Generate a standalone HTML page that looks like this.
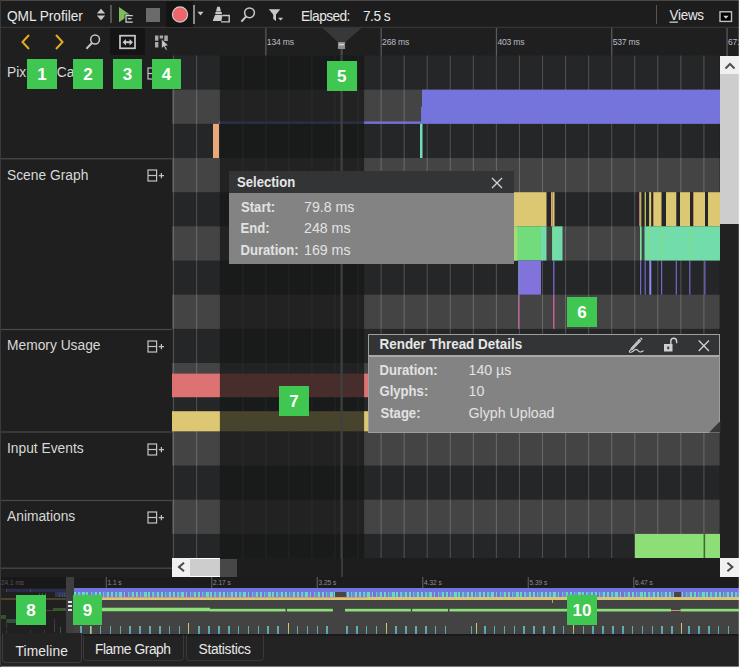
<!DOCTYPE html>
<html><head><meta charset="utf-8"><title>QML Profiler</title>
<style>
html,body{margin:0;padding:0;background:#1f1f1f;}
body{width:740px;height:668px;position:relative;overflow:hidden;font-family:"Liberation Sans",sans-serif;color:#e4e4e4;}
.a{position:absolute;}
.tb{font-size:13.2px;color:#e8e8e8;white-space:nowrap;}
.sy{display:inline-block;transform:scaleY(1.12);transform-origin:0 55%;}
.lbl{font-size:13.8px;color:#d8d8d8;white-space:nowrap;}
.tick{font-size:8.6px;color:#b8bcc8;white-space:nowrap;letter-spacing:-0.2px;}
.otick{font-size:6.5px;color:#8c8c8c;white-space:nowrap;}
.num{background:#3fc751;color:#fff;font-weight:bold;font-size:17px;text-align:center;font-family:"Liberation Sans",sans-serif;}
.pt{font-weight:bold;font-size:13.1px;transform:scaleY(1.1);transform-origin:0 50%;color:#e6e6e6;white-space:nowrap;}
.pk{font-weight:bold;font-size:13.1px;transform:scaleY(1.1);transform-origin:0 50%;color:#e2e2e2;white-space:nowrap;}
.pv{font-size:14.2px;transform:scaleY(1.04);transform-origin:0 50%;color:#e2e2e2;white-space:nowrap;}
svg{position:absolute;overflow:visible;}
</style></head><body>

<!-- toolbar -->
<div class="a" style="left:0px;top:0px;width:740px;height:28px;background:#1d1d1d;"></div>
<div class="a" style="left:0px;top:0px;width:740px;height:1.1px;background:#484848;"></div>
<svg style="left:0;top:26px" width="740" height="4"><rect x="0" y="0.7" width="740" height="2.2" fill="#343434"/></svg>
<div class="a" style="left:166px;top:1px;width:27px;height:26px;background:#141414;"></div>
<div class="a tb" style="left:7px;top:9px;font-size:13.7px;letter-spacing:-0.05px;"><span class="sy">QML Profiler</span></div>
<svg style="left:95px;top:7px" width="12" height="16" viewBox="0 0 12 16"><path d="M1.8 6.5 L6 1.8 L10.2 6.5 Z M1.8 8.5 L6 13.3 L10.2 8.5 Z" fill="#c8c8c8"/></svg>
<div class="a" style="left:110px;top:5px;width:1.5px;height:18px;background:#555;"></div>
<svg style="left:117px;top:5px" width="20" height="20" viewBox="0 0 20 20"><path d="M2 2 L2 17.3 L13 9.7 Z" fill="#7dbb60"/><rect x="7.6" y="9.6" width="9" height="9" fill="#1d1d1d"/><path d="M15.8 10.5 H9 V17 H15.8 M10.8 13.7 H14.6" stroke="#d0d0d0" stroke-width="1.25" fill="none"/></svg>
<div class="a" style="left:146px;top:8px;width:13.5px;height:13.5px;background:#6b6b6b;"></div>
<svg style="left:170px;top:4px" width="21" height="21" viewBox="0 0 21 21"><circle cx="10" cy="10.5" r="7.6" fill="#ee666c" stroke="#d0d0d0" stroke-width="1.1"/></svg>
<div class="a" style="left:193.4px;top:5.4px;width:1.5px;height:18.2px;background:#8a8a8a;"></div>
<svg style="left:197px;top:11px" width="8" height="6" viewBox="0 0 8 6"><path d="M0.5 0.8 H6.5 L3.5 4.6 Z" fill="#c8c8c8"/></svg>
<svg style="left:210px;top:4px" width="22" height="20" viewBox="0 0 22 20"><path d="M7.2 2.8 H9.8 L11 7.5 H6 Z M5.4 7.9 H11.8 V10.2 H5.4 Z M5 10.9 H12.5 L11.4 17 H2.7 Z" fill="#c8c8c8"/><path d="M12.4 11.5 H19.2 V17.9 H11" stroke="#c8c8c8" stroke-width="1.4" fill="none"/></svg>
<svg style="left:238px;top:4px" width="20" height="20" viewBox="0 0 20 20"><circle cx="11.5" cy="8.8" r="4.9" fill="none" stroke="#c8c8c8" stroke-width="1.5"/><path d="M8.2 12.4 L3.4 17.6" stroke="#c8c8c8" stroke-width="2.1"/></svg>
<svg style="left:266px;top:6px" width="20" height="18" viewBox="0 0 20 18"><path d="M2.8 3.2 H14.3 L10 8.5 V15 L7.2 13 V8.5 Z" fill="#c8c8c8"/><path d="M12 11.8 H17.2 L14.6 14.6 Z" fill="#c8c8c8"/></svg>
<div class="a tb" style="left:301px;top:8.5px;font-size:13.7px;letter-spacing:-0.55px;"><span class="sy">Elapsed:</span></div>
<div class="a tb" style="left:363px;top:8.5px;font-size:13.7px;letter-spacing:-0.5px;"><span class="sy">7.5 s</span></div>
<div class="a" style="left:656px;top:5px;width:1.2px;height:19px;background:#555;"></div>
<div class="a tb" style="left:669.5px;top:8.3px;font-size:13.4px;letter-spacing:-0.25px;"><span class="sy"><span style="text-decoration:underline;text-underline-offset:0.5px;">V</span>iews</span></div>
<svg style="left:719px;top:11px" width="14" height="12" viewBox="0 0 14 12"><rect x="1" y="0.8" width="11.5" height="9.6" fill="#000" stroke="#c0c0c0" stroke-width="1.4"/><path d="M4.2 4.8 H9.6 L6.9 7.8 Z" fill="#d0d0d0"/></svg>
<!-- nav row -->
<div class="a" style="left:0px;top:28px;width:740px;height:28px;background:#1f1f1f;"></div>
<div class="a" style="left:110px;top:28px;width:35px;height:28px;background:#141414;"></div>
<svg style="left:18px;top:33px" width="16" height="18" viewBox="0 0 16 18"><path d="M11 2 L4.5 9 L11 16" fill="none" stroke="#e0ae1e" stroke-width="2"/></svg>
<svg style="left:51px;top:33px" width="16" height="18" viewBox="0 0 16 18"><path d="M5 2 L11.5 9 L5 16" fill="none" stroke="#e0ae1e" stroke-width="2"/></svg>
<svg style="left:84px;top:32px" width="20" height="20" viewBox="0 0 20 20"><circle cx="11.1" cy="7.5" r="4.4" fill="none" stroke="#c4c4c4" stroke-width="1.5"/><path d="M8.2 10.8 L2.4 16.8" stroke="#c4c4c4" stroke-width="2"/></svg>
<svg style="left:119px;top:34px" width="18" height="16" viewBox="0 0 18 16"><rect x="1" y="1.7" width="15" height="12.6" fill="none" stroke="#c8c8c8" stroke-width="1.7"/><path d="M5.5 8.2 H12" stroke="#c8c8c8" stroke-width="2"/><path d="M7 5 L3.5 8.2 L7 11.4 Z M10.5 5 L14 8.2 L10.5 11.4 Z" fill="#c8c8c8"/></svg>
<svg style="left:154px;top:34px" width="16" height="18" viewBox="0 0 16 18"><path d="M1 1.4 H4.4 V6.8 H1 Z M1 8 H4.4 V13.6 H1 Z M5.7 1.4 H9.1 V4.5 H5.7 Z M10.3 1.4 H13.8 V7 H10.3 Z" fill="#a8a8a8"/><path d="M7.6 5 L7.6 14.6 L9.9 12.5 L11.8 16.3 L13.3 15.6 L11.4 11.9 L14.4 11.6 Z" fill="#c8c8c8" stroke="#1f1f1f" stroke-width="0.6"/></svg>
<svg style="left:0;top:28px" width="740" height="28"><rect x="265.24" y="0" width="1.25" height="28" fill="#5c5c5c"/></svg>
<div class="a tick" style="left:266.8px;top:37px;">134 ms</div>
<svg style="left:0;top:28px" width="740" height="28"><rect x="380.54" y="0" width="1.25" height="28" fill="#5c5c5c"/></svg>
<div class="a tick" style="left:382.1px;top:37px;">268 ms</div>
<svg style="left:0;top:28px" width="740" height="28"><rect x="495.84" y="0" width="1.25" height="28" fill="#5c5c5c"/></svg>
<div class="a tick" style="left:497.4px;top:37px;">403 ms</div>
<svg style="left:0;top:28px" width="740" height="28"><rect x="611.14" y="0" width="1.25" height="28" fill="#5c5c5c"/></svg>
<div class="a tick" style="left:612.7px;top:37px;">537 ms</div>
<svg style="left:0;top:28px" width="740" height="28"><rect x="726.44" y="0" width="1.25" height="28" fill="#5c5c5c"/></svg>
<div class="a tick" style="left:728.0px;top:37px;">671 ms</div>
<svg style="left:322px;top:28px" width="40" height="28" viewBox="0 0 40 28"><path d="M0.5 0 H39.5 L21.8 15.5 H17.6 Z" fill="#37383a"/><rect x="18.5" y="20" width="2.3" height="8" fill="#474747"/><rect x="15.9" y="14" width="7.2" height="7" fill="#8e8e8e"/><rect x="17" y="15.8" width="5" height="1.5" fill="#d4d4d4"/></svg>
<!-- timeline rows -->
<svg style="left:171px;top:55px;overflow:hidden;" width="548.6" height="503" viewBox="0 0 548.6 503">
<rect x="0.8" y="0.5" width="547.8" height="520" fill="#252628"/>
<rect x="0.80" y="34.67" width="547.80" height="34.17" fill="#444444"/>
<rect x="0.80" y="103.01" width="547.80" height="34.17" fill="#444444"/>
<rect x="0.80" y="171.35" width="547.80" height="34.17" fill="#444444"/>
<rect x="0.80" y="239.69" width="547.80" height="34.17" fill="#444444"/>
<rect x="0.80" y="308.03" width="547.80" height="34.17" fill="#444444"/>
<rect x="0.80" y="376.37" width="547.80" height="34.17" fill="#444444"/>
<rect x="0.80" y="444.71" width="547.80" height="34.17" fill="#444444"/>
<rect x="2.00" y="0.50" width="1.10" height="520.00" fill="rgba(255,255,255,0.19)"/>
<rect x="25.06" y="0.50" width="1.10" height="520.00" fill="rgba(255,255,255,0.19)"/>
<rect x="71.18" y="0.50" width="1.10" height="520.00" fill="rgba(255,255,255,0.19)"/>
<rect x="94.24" y="0.50" width="1.10" height="520.00" fill="rgba(255,255,255,0.19)"/>
<rect x="117.30" y="0.50" width="1.10" height="520.00" fill="rgba(255,255,255,0.19)"/>
<rect x="140.36" y="0.50" width="1.10" height="520.00" fill="rgba(255,255,255,0.19)"/>
<rect x="163.42" y="0.50" width="1.10" height="520.00" fill="rgba(255,255,255,0.19)"/>
<rect x="186.48" y="0.50" width="1.10" height="520.00" fill="rgba(255,255,255,0.19)"/>
<rect x="209.54" y="0.50" width="1.10" height="520.00" fill="rgba(255,255,255,0.19)"/>
<rect x="232.60" y="0.50" width="1.10" height="520.00" fill="rgba(255,255,255,0.19)"/>
<rect x="255.66" y="0.50" width="1.10" height="520.00" fill="rgba(255,255,255,0.19)"/>
<rect x="278.72" y="0.50" width="1.10" height="520.00" fill="rgba(255,255,255,0.19)"/>
<rect x="301.78" y="0.50" width="1.10" height="520.00" fill="rgba(255,255,255,0.19)"/>
<rect x="324.84" y="0.50" width="1.10" height="520.00" fill="rgba(255,255,255,0.19)"/>
<rect x="347.90" y="0.50" width="1.10" height="520.00" fill="rgba(255,255,255,0.19)"/>
<rect x="370.96" y="0.50" width="1.10" height="520.00" fill="rgba(255,255,255,0.19)"/>
<rect x="394.02" y="0.50" width="1.10" height="520.00" fill="rgba(255,255,255,0.19)"/>
<rect x="417.08" y="0.50" width="1.10" height="520.00" fill="rgba(255,255,255,0.19)"/>
<rect x="440.14" y="0.50" width="1.10" height="520.00" fill="rgba(255,255,255,0.19)"/>
<rect x="463.20" y="0.50" width="1.10" height="520.00" fill="rgba(255,255,255,0.19)"/>
<rect x="486.26" y="0.50" width="1.10" height="520.00" fill="rgba(255,255,255,0.19)"/>
<rect x="509.32" y="0.50" width="1.10" height="520.00" fill="rgba(255,255,255,0.19)"/>
<rect x="532.38" y="0.50" width="1.10" height="520.00" fill="rgba(255,255,255,0.19)"/>
<rect x="48.00" y="66.45" width="203.00" height="2.39" fill="#7272d8"/>
<rect x="250.00" y="51.75" width="1.00" height="17.09" fill="#7272d8"/>
<rect x="251.00" y="34.67" width="298.00" height="34.17" fill="#7474dc"/>
<rect x="42.00" y="68.84" width="6.00" height="34.17" fill="#e8a878"/>
<rect x="249.00" y="68.84" width="2.50" height="34.17" fill="#72dcb8"/>
<rect x="343.00" y="137.18" width="32.50" height="34.17" fill="#dcc872"/>
<rect x="380.00" y="137.18" width="1.50" height="34.17" fill="#e8a070"/>
<rect x="381.50" y="137.18" width="2.00" height="34.17" fill="#dcc872"/>
<rect x="343.00" y="171.35" width="27.00" height="34.17" fill="#72dc7c"/>
<rect x="343.00" y="171.35" width="3.40" height="34.17" fill="#a4dc72"/>
<rect x="370.00" y="171.35" width="5.50" height="34.17" fill="#72dcaa"/>
<rect x="381.00" y="171.35" width="1.00" height="34.17" fill="#72dc7c"/>
<rect x="382.00" y="171.35" width="9.50" height="34.17" fill="#72dcaa"/>
<rect x="347.50" y="205.52" width="22.50" height="34.17" fill="#8272dc"/>
<rect x="347.30" y="205.52" width="1.00" height="34.17" fill="#7a98dc"/>
<rect x="382.00" y="205.52" width="1.50" height="34.17" fill="#6c60b8"/>
<rect x="347.00" y="239.69" width="1.30" height="34.17" fill="#c0609a"/>
<rect x="382.00" y="239.69" width="1.50" height="34.17" fill="#c0609a"/>
<rect x="468.20" y="137.18" width="1.00" height="34.17" fill="#e08878"/>
<rect x="469.20" y="137.18" width="1.10" height="34.17" fill="#dcc872"/>
<rect x="473.60" y="137.18" width="1.40" height="34.17" fill="#b8b860"/>
<rect x="478.20" y="137.18" width="2.00" height="34.17" fill="#dcc872"/>
<rect x="478.20" y="137.18" width="0.70" height="34.17" fill="#a8cc6c"/>
<rect x="482.20" y="137.18" width="0.80" height="34.17" fill="#e8a070"/>
<rect x="483.00" y="137.18" width="7.50" height="34.17" fill="#dcc872"/>
<rect x="495.00" y="137.18" width="10.30" height="34.17" fill="#dcc872"/>
<rect x="509.00" y="137.18" width="10.00" height="34.17" fill="#dcc872"/>
<rect x="523.00" y="137.18" width="11.00" height="34.17" fill="#dcc872"/>
<rect x="537.00" y="137.18" width="12.00" height="34.17" fill="#dcc872"/>
<rect x="522.20" y="137.18" width="0.80" height="34.17" fill="#e8a070"/>
<rect x="473.50" y="171.35" width="75.50" height="34.17" fill="#72dcaa"/>
<rect x="469.00" y="171.35" width="1.60" height="34.17" fill="#7ce0a0"/>
<rect x="478.00" y="171.35" width="1.00" height="34.17" fill="#86dc7c"/>
<rect x="490.00" y="171.35" width="1.00" height="34.17" fill="#86dc7c"/>
<rect x="518.60" y="171.35" width="1.00" height="34.17" fill="#86dc7c"/>
<rect x="469.00" y="205.52" width="1.20" height="34.17" fill="#7468c8"/>
<rect x="473.60" y="205.52" width="1.20" height="34.17" fill="#7468c8"/>
<rect x="478.30" y="205.52" width="2.00" height="34.17" fill="#8a8cf4"/>
<rect x="490.00" y="205.52" width="1.20" height="34.17" fill="#7468c8"/>
<rect x="504.70" y="205.52" width="1.20" height="34.17" fill="#7468c8"/>
<rect x="518.20" y="205.52" width="1.20" height="34.17" fill="#7468c8"/>
<rect x="533.30" y="205.52" width="1.20" height="34.17" fill="#7468c8"/>
<rect x="0.80" y="318.62" width="196.20" height="23.58" fill="#dc7272"/>
<rect x="0.80" y="356.21" width="196.20" height="20.16" fill="#dcc872"/>
<rect x="464.00" y="478.88" width="68.80" height="34.17" fill="#8ede78"/>
<rect x="532.80" y="478.88" width="1.30" height="34.17" fill="#3c6a34"/>
<rect x="534.10" y="478.88" width="14.90" height="34.17" fill="#8ede78"/>
<rect x="48.90" y="0.50" width="144.20" height="520.00" fill="rgba(21,23,22,0.75)"/>
<rect x="169.50" y="0.50" width="2.20" height="520.00" fill="#404040"/>
</svg>
<!-- labels -->
<div class="a" style="left:0px;top:55px;width:171.8px;height:513px;background:#1f1f1f;"></div>
<svg style="left:0;top:0" width="172" height="600">
<rect x="0" y="158.10" width="171.8" height="1.3" fill="#484848"/>
<rect x="0" y="328.85" width="171.8" height="1.3" fill="#484848"/>
<rect x="0" y="431.35" width="171.8" height="1.3" fill="#484848"/>
<rect x="0" y="499.85" width="171.8" height="1.3" fill="#484848"/>
<rect x="0" y="567.55" width="171.8" height="1.3" fill="#484848"/>
</svg>
<div class="a lbl" style="left:7px;top:65.25px;">Pixmap Cache</div>
<svg style="left:147px;top:66.8px" width="20" height="14" viewBox="0 0 20 14"><rect x="1" y="1" width="8.6" height="11" fill="none" stroke="#c4c4c4" stroke-width="1.2"/><path d="M1 6.5 H9.6" stroke="#c4c4c4" stroke-width="1.2"/><path d="M11.8 6.6 H17 M14.4 4 V9.2" stroke="#c4c4c4" stroke-width="1.2"/></svg>
<div class="a lbl" style="left:7px;top:167.70px;">Scene Graph</div>
<svg style="left:147px;top:169.2px" width="20" height="14" viewBox="0 0 20 14"><rect x="1" y="1" width="8.6" height="11" fill="none" stroke="#c4c4c4" stroke-width="1.2"/><path d="M1 6.5 H9.6" stroke="#c4c4c4" stroke-width="1.2"/><path d="M11.8 6.6 H17 M14.4 4 V9.2" stroke="#c4c4c4" stroke-width="1.2"/></svg>
<div class="a lbl" style="left:7px;top:338.45px;">Memory Usage</div>
<svg style="left:147px;top:340.0px" width="20" height="14" viewBox="0 0 20 14"><rect x="1" y="1" width="8.6" height="11" fill="none" stroke="#c4c4c4" stroke-width="1.2"/><path d="M1 6.5 H9.6" stroke="#c4c4c4" stroke-width="1.2"/><path d="M11.8 6.6 H17 M14.4 4 V9.2" stroke="#c4c4c4" stroke-width="1.2"/></svg>
<div class="a lbl" style="left:7px;top:440.95px;">Input Events</div>
<svg style="left:147px;top:442.5px" width="20" height="14" viewBox="0 0 20 14"><rect x="1" y="1" width="8.6" height="11" fill="none" stroke="#c4c4c4" stroke-width="1.2"/><path d="M1 6.5 H9.6" stroke="#c4c4c4" stroke-width="1.2"/><path d="M11.8 6.6 H17 M14.4 4 V9.2" stroke="#c4c4c4" stroke-width="1.2"/></svg>
<div class="a lbl" style="left:7px;top:509.45px;">Animations</div>
<svg style="left:147px;top:511.0px" width="20" height="14" viewBox="0 0 20 14"><rect x="1" y="1" width="8.6" height="11" fill="none" stroke="#c4c4c4" stroke-width="1.2"/><path d="M1 6.5 H9.6" stroke="#c4c4c4" stroke-width="1.2"/><path d="M11.8 6.6 H17 M14.4 4 V9.2" stroke="#c4c4c4" stroke-width="1.2"/></svg>
<div class="a" style="left:720px;top:56px;width:19px;height:502px;background:#212121;"></div>
<div class="a" style="left:720px;top:56px;width:19px;height:18px;background:#f0f0f0;"></div>
<svg style="left:724px;top:61px" width="12" height="10" viewBox="0 0 12 10"><path d="M1.5 7.5 L6 3 L10.5 7.5" fill="none" stroke="#505050" stroke-width="2"/></svg>
<div class="a" style="left:720.4px;top:74px;width:18.2px;height:150px;background:#cdcdcd;"></div>
<div class="a" style="left:172px;top:558px;width:567px;height:19px;background:#1d1d1d;"></div>
<div class="a" style="left:172px;top:558px;width:18px;height:19px;background:#f0f0f0;"></div>
<svg style="left:176.3px;top:561.3px" width="10" height="12" viewBox="0 0 10 12"><path d="M8 1.8 L3 6 L8 10.2" fill="none" stroke="#484848" stroke-width="2"/></svg>
<div class="a" style="left:190px;top:558px;width:30px;height:19px;background:#ffffff;"></div>
<div class="a" style="left:190px;top:559px;width:30px;height:17.3px;background:#cdcdcd;"></div>
<div class="a" style="left:220px;top:558.6px;width:17px;height:18.4px;background:#474747;"></div>
<div class="a" style="left:719.6px;top:558px;width:19.2px;height:19px;background:#f0f0f0;"></div>
<svg style="left:724.5px;top:561.3px" width="10" height="12" viewBox="0 0 10 12"><path d="M2.4 1.8 L7.4 6 L2.4 10.2" fill="none" stroke="#484848" stroke-width="2"/></svg>
<div class="a" style="left:340.5px;top:558px;width:2.2px;height:19px;background:#3a3a3a;"></div>
<!-- overview -->
<div class="a" style="left:0px;top:577px;width:739px;height:57.5px;background:#434343;"></div>
<div class="a" style="left:0px;top:577px;width:739px;height:11px;background:#1c1c1c;"></div>
<div class="a" style="left:74px;top:588px;width:665px;height:4.5px;background:#7474e0;"></div>
<div class="a" style="left:74px;top:592px;width:665px;height:4.6px;background:#7272dc;background-image:repeating-linear-gradient(90deg,#62dcc0 0,#62dcc0 1.8px,#7474dc 1.8px,#7474dc 4.1px,#66c8d0 4.1px,#66c8d0 5.5px,#6c8ce0 5.5px,#6c8ce0 8.3px,#62dcc0 8.3px,#62dcc0 10.6px,#7878dc 10.6px,#7878dc 12.4px);"></div>
<div class="a" style="left:335px;top:592px;width:10.7px;height:5px;background:#464646;"></div>
<div class="a" style="left:673.7px;top:592px;width:7px;height:5px;background:#464646;"></div>
<div class="a" style="left:74px;top:596.6px;width:665px;height:3.7px;background:#dcc872;"></div>
<div class="a" style="left:74px;top:596.6px;width:292.6px;height:1.7px;background:#e09c72;"></div>
<svg style="left:0;top:600px" width="740" height="20">
<rect x="102" y="7.7" width="108.0" height="3.6" fill="#82da72"/><rect x="102" y="8.5" width="108.0" height="2.0" fill="#90e67e"/>
<rect x="210" y="8.8" width="75.5" height="2.7" fill="#82da72"/><rect x="210" y="9.6" width="75.5" height="1.1" fill="#90e67e"/>
<rect x="287" y="8.8" width="45.8" height="2.7" fill="#82da72"/><rect x="287" y="9.6" width="45.8" height="1.1" fill="#90e67e"/>
<rect x="345" y="8.8" width="65.8" height="2.7" fill="#82da72"/><rect x="345" y="9.6" width="65.8" height="1.1" fill="#90e67e"/>
<rect x="412.2" y="8.8" width="35.8" height="2.7" fill="#82da72"/><rect x="412.2" y="9.6" width="35.8" height="1.1" fill="#90e67e"/>
<rect x="449.5" y="8.8" width="221.5" height="2.7" fill="#82da72"/><rect x="449.5" y="9.6" width="221.5" height="1.1" fill="#90e67e"/>
<rect x="680.6" y="8.8" width="58.2" height="2.7" fill="#82da72"/><rect x="680.6" y="9.6" width="58.2" height="1.1" fill="#90e67e"/>
</svg>
<div class="a" style="left:671px;top:610px;width:9.6px;height:1.3px;background:#e09060;"></div>
<div class="a" style="left:80px;top:626px;width:1.7px;height:8.3px;background:#5ab0c8;background:linear-gradient(#62b88c,#5a9ad0);"></div>
<div class="a" style="left:90px;top:626px;width:1.7px;height:8.3px;background:#5ab0c8;background:linear-gradient(#62b88c,#5a9ad0);"></div>
<div class="a" style="left:99.5px;top:626px;width:1.7px;height:8.3px;background:#5ab0c8;background:linear-gradient(#62b88c,#5a9ad0);"></div>
<div class="a" style="left:109.5px;top:626px;width:1.7px;height:8.3px;background:#5ab0c8;background:linear-gradient(#62b88c,#5a9ad0);"></div>
<div class="a" style="left:119.5px;top:626px;width:1.7px;height:8.3px;background:#5ab0c8;background:linear-gradient(#62b88c,#5a9ad0);"></div>
<div class="a" style="left:129px;top:626px;width:1.7px;height:8.3px;background:#5ab0c8;background:linear-gradient(#62b88c,#5a9ad0);"></div>
<div class="a" style="left:139px;top:626px;width:1.7px;height:8.3px;background:#5ab0c8;background:linear-gradient(#62b88c,#5a9ad0);"></div>
<div class="a" style="left:149px;top:626px;width:1.7px;height:8.3px;background:#5ab0c8;background:linear-gradient(#62b88c,#5a9ad0);"></div>
<div class="a" style="left:159px;top:626px;width:1.7px;height:8.3px;background:#5ab0c8;background:linear-gradient(#62b88c,#5a9ad0);"></div>
<div class="a" style="left:168.5px;top:626px;width:1.7px;height:8.3px;background:#5ab0c8;background:linear-gradient(#62b88c,#5a9ad0);"></div>
<div class="a" style="left:178.5px;top:626px;width:1.7px;height:8.3px;background:#5ab0c8;background:linear-gradient(#62b88c,#5a9ad0);"></div>
<div class="a" style="left:198px;top:626px;width:1.7px;height:8.3px;background:#5ab0c8;background:linear-gradient(#62b88c,#5a9ad0);"></div>
<div class="a" style="left:208px;top:626px;width:1.7px;height:8.3px;background:#5ab0c8;background:linear-gradient(#62b88c,#5a9ad0);"></div>
<div class="a" style="left:218px;top:626px;width:1.7px;height:8.3px;background:#5ab0c8;background:linear-gradient(#62b88c,#5a9ad0);"></div>
<div class="a" style="left:228px;top:626px;width:1.7px;height:8.3px;background:#5ab0c8;background:linear-gradient(#62b88c,#5a9ad0);"></div>
<div class="a" style="left:237.5px;top:626px;width:1.7px;height:8.3px;background:#5ab0c8;background:linear-gradient(#62b88c,#5a9ad0);"></div>
<div class="a" style="left:247.5px;top:626px;width:1.7px;height:8.3px;background:#5ab0c8;background:linear-gradient(#62b88c,#5a9ad0);"></div>
<div class="a" style="left:257.5px;top:626px;width:1.7px;height:8.3px;background:#5ab0c8;background:linear-gradient(#62b88c,#5a9ad0);"></div>
<div class="a" style="left:267px;top:626px;width:1.7px;height:8.3px;background:#5ab0c8;background:linear-gradient(#62b88c,#5a9ad0);"></div>
<div class="a" style="left:277px;top:626px;width:1.7px;height:8.3px;background:#5ab0c8;background:linear-gradient(#62b88c,#5a9ad0);"></div>
<div class="a" style="left:296.5px;top:626px;width:1.7px;height:8.3px;background:#5ab0c8;background:linear-gradient(#62b88c,#5a9ad0);"></div>
<div class="a" style="left:306.5px;top:626px;width:1.7px;height:8.3px;background:#5ab0c8;background:linear-gradient(#62b88c,#5a9ad0);"></div>
<div class="a" style="left:316.5px;top:626px;width:1.7px;height:8.3px;background:#5ab0c8;background:linear-gradient(#62b88c,#5a9ad0);"></div>
<div class="a" style="left:326px;top:626px;width:1.7px;height:8.3px;background:#5ab0c8;background:linear-gradient(#62b88c,#5a9ad0);"></div>
<div class="a" style="left:346px;top:626px;width:1.7px;height:8.3px;background:#5ab0c8;background:linear-gradient(#62b88c,#5a9ad0);"></div>
<div class="a" style="left:356px;top:626px;width:1.7px;height:8.3px;background:#5ab0c8;background:linear-gradient(#62b88c,#5a9ad0);"></div>
<div class="a" style="left:365.5px;top:626px;width:1.7px;height:8.3px;background:#5ab0c8;background:linear-gradient(#62b88c,#5a9ad0);"></div>
<div class="a" style="left:375.5px;top:626px;width:1.7px;height:8.3px;background:#5ab0c8;background:linear-gradient(#62b88c,#5a9ad0);"></div>
<div class="a" style="left:395px;top:626px;width:1.7px;height:8.3px;background:#5ab0c8;background:linear-gradient(#62b88c,#5a9ad0);"></div>
<div class="a" style="left:405px;top:626px;width:1.7px;height:8.3px;background:#5ab0c8;background:linear-gradient(#62b88c,#5a9ad0);"></div>
<div class="a" style="left:415px;top:626px;width:1.7px;height:8.3px;background:#5ab0c8;background:linear-gradient(#62b88c,#5a9ad0);"></div>
<div class="a" style="left:425px;top:626px;width:1.7px;height:8.3px;background:#5ab0c8;background:linear-gradient(#62b88c,#5a9ad0);"></div>
<div class="a" style="left:434.5px;top:626px;width:1.7px;height:8.3px;background:#5ab0c8;background:linear-gradient(#62b88c,#5a9ad0);"></div>
<div class="a" style="left:444.5px;top:626px;width:1.7px;height:8.3px;background:#5ab0c8;background:linear-gradient(#62b88c,#5a9ad0);"></div>
<div class="a" style="left:484px;top:626px;width:1.7px;height:8.3px;background:#5ab0c8;background:linear-gradient(#62b88c,#5a9ad0);"></div>
<div class="a" style="left:493.5px;top:626px;width:1.7px;height:8.3px;background:#5ab0c8;background:linear-gradient(#62b88c,#5a9ad0);"></div>
<div class="a" style="left:503.5px;top:626px;width:1.7px;height:8.3px;background:#5ab0c8;background:linear-gradient(#62b88c,#5a9ad0);"></div>
<div class="a" style="left:513.5px;top:626px;width:1.7px;height:8.3px;background:#5ab0c8;background:linear-gradient(#62b88c,#5a9ad0);"></div>
<div class="a" style="left:523px;top:626px;width:1.7px;height:8.3px;background:#5ab0c8;background:linear-gradient(#62b88c,#5a9ad0);"></div>
<div class="a" style="left:533px;top:626px;width:1.7px;height:8.3px;background:#5ab0c8;background:linear-gradient(#62b88c,#5a9ad0);"></div>
<div class="a" style="left:543px;top:626px;width:1.7px;height:8.3px;background:#5ab0c8;background:linear-gradient(#62b88c,#5a9ad0);"></div>
<div class="a" style="left:553px;top:626px;width:1.7px;height:8.3px;background:#5ab0c8;background:linear-gradient(#62b88c,#5a9ad0);"></div>
<div class="a" style="left:562.5px;top:626px;width:1.7px;height:8.3px;background:#5ab0c8;background:linear-gradient(#62b88c,#5a9ad0);"></div>
<div class="a" style="left:582.5px;top:626px;width:1.7px;height:8.3px;background:#5ab0c8;background:linear-gradient(#62b88c,#5a9ad0);"></div>
<div class="a" style="left:592px;top:626px;width:1.7px;height:8.3px;background:#5ab0c8;background:linear-gradient(#62b88c,#5a9ad0);"></div>
<div class="a" style="left:602px;top:626px;width:1.7px;height:8.3px;background:#5ab0c8;background:linear-gradient(#62b88c,#5a9ad0);"></div>
<div class="a" style="left:612px;top:626px;width:1.7px;height:8.3px;background:#5ab0c8;background:linear-gradient(#62b88c,#5a9ad0);"></div>
<div class="a" style="left:622px;top:626px;width:1.7px;height:8.3px;background:#5ab0c8;background:linear-gradient(#62b88c,#5a9ad0);"></div>
<div class="a" style="left:631.5px;top:626px;width:1.7px;height:8.3px;background:#5ab0c8;background:linear-gradient(#62b88c,#5a9ad0);"></div>
<div class="a" style="left:641.5px;top:626px;width:1.7px;height:8.3px;background:#5ab0c8;background:linear-gradient(#62b88c,#5a9ad0);"></div>
<div class="a" style="left:651.5px;top:626px;width:1.7px;height:8.3px;background:#5ab0c8;background:linear-gradient(#62b88c,#5a9ad0);"></div>
<div class="a" style="left:661px;top:626px;width:1.7px;height:8.3px;background:#5ab0c8;background:linear-gradient(#62b88c,#5a9ad0);"></div>
<div class="a" style="left:671px;top:626px;width:1.7px;height:8.3px;background:#5ab0c8;background:linear-gradient(#62b88c,#5a9ad0);"></div>
<div class="a" style="left:688px;top:626px;width:1.7px;height:8.3px;background:#5ab0c8;background:linear-gradient(#62b88c,#5a9ad0);"></div>
<div class="a" style="left:698px;top:626px;width:1.7px;height:8.3px;background:#5ab0c8;background:linear-gradient(#62b88c,#5a9ad0);"></div>
<div class="a" style="left:708px;top:626px;width:1.7px;height:8.3px;background:#5ab0c8;background:linear-gradient(#62b88c,#5a9ad0);"></div>
<div class="a" style="left:717.5px;top:626px;width:1.7px;height:8.3px;background:#5ab0c8;background:linear-gradient(#62b88c,#5a9ad0);"></div>
<div class="a" style="left:727.5px;top:626px;width:1.7px;height:8.3px;background:#5ab0c8;background:linear-gradient(#62b88c,#5a9ad0);"></div>
<div class="a" style="left:470.5px;top:626px;width:1.7px;height:8.3px;background:#5ab0c8;background:linear-gradient(#62b88c,#5a9ad0);"></div>
<div class="a" style="left:188.1px;top:622.5px;width:1.15px;height:11.8px;background:#d0c460;background:linear-gradient(#dccc60,#c8cc64 50%,#88c080);"></div>
<div class="a" style="left:287.8px;top:622.5px;width:1.15px;height:11.8px;background:#d0c460;background:linear-gradient(#dccc60,#c8cc64 50%,#88c080);"></div>
<div class="a" style="left:386.3px;top:622.5px;width:1.15px;height:11.8px;background:#d0c460;background:linear-gradient(#dccc60,#c8cc64 50%,#88c080);"></div>
<div class="a" style="left:476.3px;top:622.5px;width:1.15px;height:11.8px;background:#d0c460;background:linear-gradient(#dccc60,#c8cc64 50%,#88c080);"></div>
<div class="a" style="left:572.8px;top:622.5px;width:1.15px;height:11.8px;background:#d0c460;background:linear-gradient(#dccc60,#c8cc64 50%,#88c080);"></div>
<div class="a" style="left:680.8px;top:622.5px;width:1.15px;height:11.8px;background:#d0c460;background:linear-gradient(#dccc60,#c8cc64 50%,#88c080);"></div>
<div class="a" style="left:90px;top:626px;width:1.4px;height:8.5px;background:#c8cc6c;"></div>
<div class="a" style="left:551.5px;top:600px;width:1.2px;height:3px;background:#e09060;"></div>
<svg style="left:0;top:577px" width="740" height="11"><rect x="105.70" y="0" width="1.15" height="11" fill="#5a5a5a"/></svg>
<div class="a otick" style="left:107.5px;top:579px;">1.1 s</div>
<svg style="left:0;top:577px" width="740" height="11"><rect x="211.20" y="0" width="1.15" height="11" fill="#5a5a5a"/></svg>
<div class="a otick" style="left:213.0px;top:579px;">2.17 s</div>
<svg style="left:0;top:577px" width="740" height="11"><rect x="316.70" y="0" width="1.15" height="11" fill="#5a5a5a"/></svg>
<div class="a otick" style="left:318.5px;top:579px;">3.25 s</div>
<svg style="left:0;top:577px" width="740" height="11"><rect x="422.20" y="0" width="1.15" height="11" fill="#5a5a5a"/></svg>
<div class="a otick" style="left:424.0px;top:579px;">4.32 s</div>
<svg style="left:0;top:577px" width="740" height="11"><rect x="527.70" y="0" width="1.15" height="11" fill="#5a5a5a"/></svg>
<div class="a otick" style="left:529.5px;top:579px;">5.39 s</div>
<svg style="left:0;top:577px" width="740" height="11"><rect x="633.20" y="0" width="1.15" height="11" fill="#5a5a5a"/></svg>
<div class="a otick" style="left:635.0px;top:579px;">6.47 s</div>
<div class="a" style="left:0px;top:577px;width:66px;height:57.5px;background:#202020;"></div>
<div class="a" style="left:0px;top:577px;width:66px;height:11px;background:#181818;"></div>
<div class="a otick" style="left:1px;top:579px;color:#555;">24.1 ms</div>
<div class="a" style="left:6px;top:589px;width:60px;height:3px;background:#2b2b4e;"></div>
<div class="a" style="left:29.5px;top:589px;width:1.5px;height:3px;background:#3c4c5c;"></div>
<div class="a" style="left:5.5px;top:589px;width:1px;height:3px;background:#5a4030;"></div>
<div class="a" style="left:54.5px;top:592px;width:11.5px;height:4.5px;background:#33335a;"></div>
<div class="a" style="left:59px;top:592.5px;width:1px;height:4px;background:#2f5a58;"></div>
<div class="a" style="left:61.5px;top:592.5px;width:1px;height:4px;background:#2f5a58;"></div>
<div class="a" style="left:64px;top:592.5px;width:1px;height:4px;background:#2f5a58;"></div>
<div class="a" style="left:39px;top:592.5px;width:1px;height:3px;background:#5a4030;"></div>
<div class="a" style="left:42px;top:592.5px;width:1px;height:3px;background:#3a5a34;"></div>
<div class="a" style="left:45px;top:592.5px;width:1px;height:3px;background:#3a5a34;"></div>
<div class="a" style="left:0px;top:597.5px;width:66px;height:2px;background:#4a4428;"></div>
<div class="a" style="left:1px;top:614.7px;width:4.5px;height:4.3px;background:#34522c;"></div>
<div class="a" style="left:6.5px;top:619.3px;width:9.5px;height:3.7px;background:#2c523a;"></div>
<div class="a" style="left:53px;top:607.7px;width:13px;height:3.6px;background:#36582f;"></div>
<div class="a" style="left:45px;top:610.2px;width:8px;height:1px;background:#5a3c30;"></div>
<div class="a" style="left:54px;top:619px;width:1px;height:13px;background:#3a3058;"></div>
<div class="a" style="left:53.5px;top:624px;width:1.2px;height:8px;background:#4a4428;"></div>
<div class="a" style="left:60px;top:627px;width:1px;height:7px;background:#2f5a58;"></div>
<div class="a" style="left:6px;top:630px;width:1px;height:4.5px;background:#4a2c40;"></div>
<div class="a" style="left:30px;top:630px;width:1px;height:4.5px;background:#4a2c40;"></div>
<div class="a" style="left:44px;top:630px;width:1px;height:4.5px;background:#4a2c40;"></div>
<div class="a" style="left:6px;top:619px;width:1px;height:9px;background:#4a3428;"></div>
<div class="a" style="left:66px;top:577px;width:8px;height:57.5px;background:#3e3e3e;"></div>
<div class="a" style="left:68px;top:600.5px;width:4px;height:2px;background:#e0e0e0;"></div>
<div class="a" style="left:68px;top:604.5px;width:4px;height:2px;background:#e0e0e0;"></div>
<div class="a" style="left:68px;top:608.5px;width:4px;height:2px;background:#e0e0e0;"></div>
<!-- tabs -->
<div class="a" style="left:0px;top:634px;width:740px;height:34px;background:#232323;"></div>
<div class="a" style="left:0px;top:634px;width:740px;height:1.6px;background:#1a1a1a;"></div>
<div class="a tb" style="left:2px;top:633px;width:77.5px;height:28.5px;border:1px solid #3c3c3c;border-top:none;border-radius:0 0 4px 4px;background:#232323;box-sizing:content-box;"><div class="a" style="left:12.5px;top:11px;font-size:13.8px;letter-spacing:0.1px;">Timeline</div></div>
<div class="a tb" style="left:83px;top:635px;width:99px;height:24.5px;border:1px solid #383838;border-top:none;border-radius:0 0 4px 4px;box-sizing:content-box;"><div class="a" style="left:11px;top:7px;font-size:13.8px;letter-spacing:-0.45px;">Flame Graph</div></div>
<div class="a tb" style="left:186px;top:635px;width:76px;height:24.5px;border:1px solid #383838;border-top:none;border-radius:0 0 4px 4px;box-sizing:content-box;"><div class="a" style="left:11.5px;top:7px;font-size:13.8px;letter-spacing:-0.3px;">Statistics</div></div>
<svg style="left:0;top:0" width="740" height="668"><rect x="0" y="666.6" width="740" height="1.4" fill="#fafafa"/><rect x="738.8" y="0" width="1.2" height="668" fill="#fafafa"/></svg>
<!-- selection popup -->
<div class="a" style="left:229px;top:171px;width:285px;height:22px;background:#333436;"></div>
<div class="a" style="left:229px;top:193px;width:285px;height:71px;background:#838383;"></div>
<div class="a pt" style="left:237px;top:174.8px;">Selection</div>
<svg style="left:491px;top:177px" width="12" height="12" viewBox="0 0 12 12"><path d="M1 1 L11 11 M11 1 L1 11" stroke="#d4d4d4" stroke-width="1.3"/></svg>
<div class="a pk" style="left:241px;top:199.6px;">Start:</div><div class="a pv" style="left:304px;top:198.6px;">79.8 ms</div>
<div class="a pk" style="left:240.5px;top:221.1px;">End:</div><div class="a pv" style="left:304px;top:220.1px;">248 ms</div>
<div class="a pk" style="left:240.5px;top:242.6px;">Duration:</div><div class="a pv" style="left:304px;top:241.6px;">169 ms</div>
<!-- details popup -->
<div class="a" style="left:368px;top:333.5px;width:352px;height:99.2px;background:#9e9e9e;"></div>
<div class="a" style="left:369px;top:334.6px;width:350px;height:20.6px;background:#333436;"></div>
<div class="a" style="left:369px;top:355.2px;width:350px;height:1.4px;background:#aaaaaa;"></div>
<div class="a" style="left:369px;top:356.6px;width:350px;height:75px;background:#838383;"></div>
<div class="a pt" style="left:379.5px;top:337.2px;font-size:13.45px;">Render Thread Details</div>
<svg style="left:627px;top:335px" width="20" height="20" viewBox="0 0 20 20"><path d="M4.2 13 L12.2 4.2 L13.9 5.8 L5.9 14.4 L3.6 15 Z" fill="#bdbdbd" stroke="#d4d4d4" stroke-width="0.8" stroke-linejoin="round"/><path d="M13 3.4 L14 2.4 L15.6 3.9 L14.6 4.9 Z" fill="#d4d4d4"/><path d="M3.6 15 C1.6 15.8 2 17.6 4 17.2 C6.5 16.7 7.4 14 9.6 14.6 C11.4 15.1 11.6 17.2 13.6 17 C15 16.9 15.6 16.2 16.6 15.6" fill="none" stroke="#d4d4d4" stroke-width="1.1"/></svg>
<svg style="left:662px;top:337px" width="18" height="16" viewBox="0 0 18 16"><rect x="2" y="7" width="8.5" height="7.5" fill="#d0d0d0"/><rect x="5.3" y="9.6" width="1.9" height="2.6" fill="#333436"/><path d="M8.8 7 V4.2 A2.9 2.9 0 0 1 14.6 4.2 V6.2" fill="none" stroke="#d0d0d0" stroke-width="1.4"/></svg>
<svg style="left:697.5px;top:340px" width="12" height="12" viewBox="0 0 12 12"><path d="M0.7 0.5 L11 11 M11 0.5 L0.7 11" stroke="#d4d4d4" stroke-width="1.25"/></svg>
<div class="a pk" style="left:379.5px;top:362.6px;">Duration:</div><div class="a pv" style="left:468.5px;top:361.6px;">140 µs</div>
<div class="a pk" style="left:379.5px;top:384.1px;">Glyphs:</div><div class="a pv" style="left:468.5px;top:383.1px;">10</div>
<div class="a pk" style="left:380.5px;top:405.6px;">Stage:</div><div class="a pv" style="left:468.5px;top:404.6px;">Glyph Upload</div>
<svg style="left:708.6px;top:421.3px" width="11.4" height="11.4" viewBox="0 0 11.4 11.4"><path d="M11.4 0 V11.4 H0 Z" fill="#37383a"/></svg>
<!-- badges -->
<div class="a num" style="left:27px;top:59px;width:29.8px;height:29.8px;line-height:31.6px;">1</div>
<div class="a num" style="left:73px;top:59px;width:29.8px;height:29.8px;line-height:31.6px;">2</div>
<div class="a num" style="left:112.7px;top:59px;width:29.8px;height:29.8px;line-height:31.6px;">3</div>
<div class="a num" style="left:151.5px;top:59px;width:29.8px;height:29.8px;line-height:31.6px;">4</div>
<div class="a num" style="left:326.8px;top:61px;width:29.8px;height:29.8px;line-height:31.6px;">5</div>
<div class="a num" style="left:567px;top:297px;width:29.8px;height:29.8px;line-height:31.6px;">6</div>
<div class="a num" style="left:279px;top:386px;width:29.8px;height:29.8px;line-height:31.6px;">7</div>
<div class="a num" style="left:16px;top:595px;width:29.8px;height:29.8px;line-height:31.6px;">8</div>
<div class="a num" style="left:72.5px;top:595px;width:29.8px;height:29.8px;line-height:31.6px;">9</div>
<div class="a num" style="left:567px;top:595px;width:29.8px;height:29.8px;line-height:31.6px;">10</div>
<div class="a" style="left:0px;top:0px;width:1.1px;height:667px;background:#3a3a3a;"></div>
</body></html>
